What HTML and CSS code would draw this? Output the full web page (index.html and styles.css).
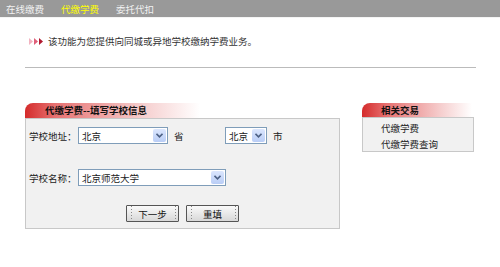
FILE: index.html
```html
<!DOCTYPE html>
<html lang="zh-CN">
<head>
    <meta charset="UTF-8">
    <title>代缴学费</title>
    <link rel="stylesheet" href="styles.css">
</head>
<body>
    <!-- Top tabs -->
    <div class="nav">
        <span class="nav-item">在线缴费</span>
        <span class="nav-item active">代缴学费</span>
        <span class="nav-item">委托代扣</span>
    </div>

    <!-- Intro -->
    <div class="intro">
        <svg class="arrows" width="14" height="7" viewBox="0 0 14 7">
            <polygon points="0,0 4,3.5 0,7" fill="#f2b3c0"/>
            <polygon points="5,0 9,3.5 5,7" fill="#e0607a"/>
            <polygon points="10,0 14,3.5 10,7" fill="#b01a30"/>
        </svg>
        <span>该功能为您提供向同城或异地学校缴纳学费业务。</span>
    </div>
    <div class="divider"></div>

    <div class="main">
        <!-- Form -->
        <div class="form-panel">
            <div class="panel-head">代缴学费--填写学校信息</div>
            <div class="panel-body">
                <div class="row">
                    <span class="label">学校地址：</span>
                    <div class="select sel-prov">
                        <span class="value">北京</span>
                        <span class="arrow"><svg width="7" height="5" viewBox="0 0 7 5"><polyline points="0.5,0.8 3.5,3.8 6.5,0.8" fill="none" stroke="#4d6185" stroke-width="1.6"/></svg></span>
                    </div>
                    <span class="unit">省</span>
                    <div class="select sel-city">
                        <span class="value">北京</span>
                        <span class="arrow"><svg width="7" height="5" viewBox="0 0 7 5"><polyline points="0.5,0.8 3.5,3.8 6.5,0.8" fill="none" stroke="#4d6185" stroke-width="1.6"/></svg></span>
                    </div>
                    <span class="unit">市</span>
                </div>
                <div class="row row-school">
                    <span class="label">学校名称：</span>
                    <div class="select sel-school">
                        <span class="value">北京师范大学</span>
                        <span class="arrow"><svg width="7" height="5" viewBox="0 0 7 5"><polyline points="0.5,0.8 3.5,3.8 6.5,0.8" fill="none" stroke="#4d6185" stroke-width="1.6"/></svg></span>
                    </div>
                </div>
                <div class="buttons">
                    <button class="btn">下一步</button>
                    <button class="btn">重填</button>
                </div>
            </div>
        </div>

        <!-- Related -->
        <div class="side-panel">
            <div class="side-head">相关交易</div>
            <div class="side-body">
                <div class="side-item">代缴学费</div>
                <div class="side-item">代缴学费查询</div>
            </div>
        </div>
    </div>
</body>
</html>
```

FILE: styles.css
```css
body {
    margin: 0;
    font-family: "Noto Sans CJK SC", "Liberation Sans", sans-serif;
    font-size: 9.5px;
    color: #222;
    background: #fff;
}
.nav {
    display: flex;
    height: 17px;
    align-items: center;
    padding-left: 6px;
    background: #999;
    border-bottom: 1px solid #f4f4f4;
}
.nav-item {
    width: 55px;
    color: #f2f2f2;
    font-size: 9.5px;
}
.nav-item.active {
    color: #ffff00;
}
.intro {
    display: flex;
    align-items: center;
    height: 14px;
    margin-top: 16px;
    padding-left: 29px;
    color: #333;
}
.arrows {
    margin-right: 5px;
}
.divider {
    height: 1px;
    margin: 19px 24px 0 25px;
    background: #bbb;
}
.main {
    display: flex;
    padding-left: 25px;
    margin-top: 35px;
}
.form-panel {
    width: 315px;
}
.panel-head {
    height: 15px;
    line-height: 15px;
    padding-left: 20px;
    border-top-left-radius: 8px;
    font-weight: bold;
    color: #111;
    background: linear-gradient(to right, #d42b2b 0, #e77272 30px, #f6d0d0 120px, #fff 175px);
}
.panel-body {
    height: 111px;
    padding: 8px 0 0 3px;
    box-sizing: border-box;
    border: 1px solid #c8c8c8;
    background: #f1f1f1;
}
.row {
    display: flex;
    align-items: center;
    height: 17px;
}
.row-school {
    margin-top: 25px;
}
.label {
    width: 49px;
}
.select {
    display: flex;
    align-items: center;
    justify-content: space-between;
    height: 15px;
    padding: 0 1px 0 3px;
    border: 1px solid #7f9db9;
    background: #fff;
}
.sel-prov {
    width: 84px;
}
.sel-city {
    width: 36px;
}
.sel-school {
    width: 142px;
}
.arrow {
    display: flex;
    align-items: center;
    justify-content: center;
    width: 13px;
    height: 13px;
    border-radius: 2px;
    background: linear-gradient(#dbe6fd, #b9cdf6);
}
.unit {
    width: 57px;
    padding-left: 6px;
    box-sizing: border-box;
}
.buttons {
    display: flex;
    gap: 7px;
    padding-left: 97px;
    margin-top: 19px;
}
.btn {
    width: 53px;
    height: 17px;
    padding: 0;
    font-family: inherit;
    font-size: 9.5px;
    color: #111;
    border: 1px solid #555;
    border-radius: 1px;
    background:
        radial-gradient(circle, #888 0.6px, transparent 0.8px) 3px 2px / 3px 3px repeat-y,
        radial-gradient(circle, #888 0.6px, transparent 0.8px) 47px 2px / 3px 3px repeat-y,
        linear-gradient(#fafafa, #d8d8d8);
}
.side-panel {
    width: 112px;
    margin-left: 22px;
}
.side-head {
    height: 14px;
    line-height: 14px;
    padding-left: 19px;
    border-top-left-radius: 8px;
    font-weight: bold;
    color: #111;
    background: linear-gradient(to right, #d42b2b 0, #e77272 25px, #f6d0d0 80px, #fff 110px);
}
.side-body {
    height: 35px;
    padding-top: 2px;
    box-sizing: border-box;
    border: 1px solid #c8c8c8;
    background: #f1f1f1;
}
.side-item {
    height: 16px;
    line-height: 16px;
    padding-left: 18px;
}
```
